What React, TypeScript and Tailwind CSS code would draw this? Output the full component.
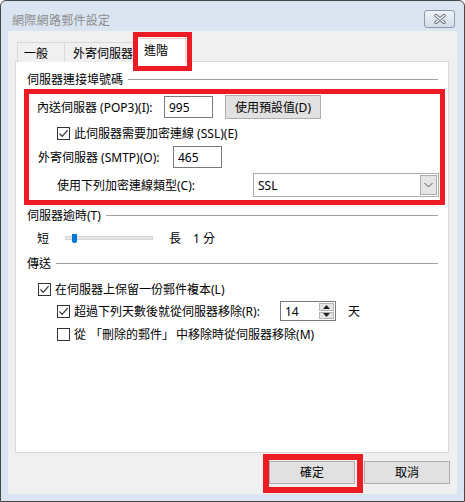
import type { ReactNode } from 'react'

const FONT = { fontFamily: '"Noto Sans", "Noto Sans CJK TC", sans-serif' }

function Check({ checked }: { checked: boolean }) {
  return (
    <span className="w-[13px] h-[13px] border border-[#333] bg-white flex items-center justify-center shrink-0">
      {checked && (
        <svg width="11" height="11" viewBox="0 0 11 11">
          <path d="M1.5 5.5 L4.2 8.3 L9.6 2.2" fill="none" stroke="#333" strokeWidth="1.2" />
        </svg>
      )}
    </span>
  )
}

function GroupTitle({ children, mt }: { children: ReactNode; mt: string }) {
  return (
    <div className={`flex items-center h-[15px] pl-[11px] pr-[10px] ${mt}`}>
      <span>{children}</span>
      <span className="flex-1 h-px bg-[#a0a0a0] ml-[5px]" />
    </div>
  )
}

function TextBox({ value, w }: { value: string; w: string }) {
  return (
    <div className={`${w} h-[22px] border border-[#7a7a7a] bg-white flex items-center pl-[4px]`}>
      {value}
    </div>
  )
}

export default function App() {
  return (
    <div
      style={FONT}
      className="w-[465px] h-[502px] bg-[#dbe5f2] border border-[#474747] rounded-t-[6px] flex flex-col text-[12px] leading-[15px] text-black"
    >
      {/* title bar */}
      <div className="h-[30px] flex items-start shrink-0">
        <span className="ml-[11px] mt-[12px] text-[#8c8c8c] text-[12px] tracking-[0.3px]">網際網路郵件設定</span>
        <div className="ml-auto mr-[9px] mt-[9px] w-[31px] h-[18px] rounded-[3px] border border-[#8e99a8] bg-gradient-to-b from-[#eef3f9] to-[#d3dce8] flex items-center justify-center">
          <svg width="14" height="10" viewBox="0 0 14 10">
            <path d="M3 1.5 L11 8.5 M11 1.5 L3 8.5" stroke="#5a6270" strokeWidth="3.2" strokeLinecap="round" />
            <path d="M3 1.5 L11 8.5 M11 1.5 L3 8.5" stroke="#ffffff" strokeWidth="1.6" strokeLinecap="round" />
          </svg>
        </div>
      </div>

      {/* client */}
      <div className="mx-[7px] h-[463px] bg-[#f0f0f0] px-[7px] pt-[7px] flex flex-col">
        {/* tabs */}
        <div className="flex items-end h-[24px] -mb-px relative z-10">
          <div className="ml-[2px] w-[48px] h-[20px] border border-b-0 border-[#d9d9d9] bg-[#f0f0f0] pl-[6px] pt-[3px]">一般</div>
          <div className="-ml-px w-[73px] h-[20px] border border-b-0 border-[#d9d9d9] bg-[#f0f0f0] pl-[8px] pt-[3px]">外寄伺服器</div>
          <div className="relative -ml-px w-[50px] h-[24px] border border-b-0 border-[#d9d9d9] bg-white pl-[7px] pt-[4px]">
            進階
            <div className="absolute -left-[4px] -top-[7px] w-[59px] h-[39px] border-[5px] border-[#ed1c24]" />
          </div>
        </div>

        {/* panel */}
        <div className="w-[434px] h-[392px] border border-[#d9d9d9] bg-white flex flex-col">
          <GroupTitle mt="mt-[10px]">伺服器連接埠號碼</GroupTitle>

          <div className="ml-[8px] mt-[2px] w-[421px] h-[116px] border-[5px] border-[#ed1c24] flex flex-col">
            <div className="flex items-center h-[24px] mt-[1px] pl-[8px]">
              <span className="w-[127px]">內送伺服器 (POP3)(I):</span>
              <TextBox value="995" w="w-[49px]" />
              <div className="ml-[12px] w-[96px] h-[24px] bg-[#e1e1e1] border border-[#adadad] flex items-center justify-center">
                使用預設值(D)
              </div>
            </div>
            <div className="flex items-center h-[16px] mt-[6px] pl-[28px] gap-[4px]">
              <Check checked />
              <span>此伺服器需要加密連線 (SSL)(E)</span>
            </div>
            <div className="flex items-center h-[22px] mt-[5px] pl-[9px]">
              <span className="w-[135px]">外寄伺服器 (SMTP)(O):</span>
              <TextBox value="465" w="w-[49px]" />
            </div>
            <div className="flex items-center h-[24px] mt-[5px] pl-[28px]">
              <span className="w-[196px]">使用下列加密連線類型(C):</span>
              <div className="w-[186px] h-[24px] border border-[#acacac] bg-white flex items-center pl-[4px] pr-[1px]">
                <span className="flex-1">SSL</span>
                <div className="w-[17px] h-[20px] bg-[#e5e5e5] border border-[#acacac] flex items-center justify-center">
                  <svg width="9" height="6" viewBox="0 0 9 6">
                    <path d="M0.5 1 L4.5 5 L8.5 1" fill="none" stroke="#555" strokeWidth="1" />
                  </svg>
                </div>
              </div>
            </div>
          </div>

          <GroupTitle mt="mt-[3px]">伺服器逾時(T)</GroupTitle>

          <div className="flex items-center h-[16px] mt-[7px] pl-[21px]">
            <span>短</span>
            <div className="relative ml-[16px] w-[88px] h-[4px] bg-[#e7e7e7] border border-[#d6d6d6]">
              <div className="absolute left-[6px] -top-[3px] w-[5px] h-[9px] bg-[#0078d7] rounded-b-[2px]" />
            </div>
            <span className="ml-[16px]">長</span>
            <span className="ml-[12px]">1 分</span>
          </div>

          <GroupTitle mt="mt-[10px]">傳送</GroupTitle>

          <div className="flex items-center h-[16px] mt-[10px] pl-[22px] gap-[4px]">
            <Check checked />
            <span>在伺服器上保留一份郵件複本(L)</span>
          </div>
          <div className="flex items-center h-[20px] mt-[4px] pl-[41px] gap-[4px]">
            <Check checked />
            <span className="w-[202px]">超過下列天數後就從伺服器移除(R):</span>
            <div className="w-[56px] h-[20px] border border-[#7a7a7a] bg-white flex items-center pl-[4px] pr-[1px]">
              <span className="flex-1">14</span>
              <div className="w-[15px] h-[16px] flex flex-col gap-px">
                <div className="flex-1 bg-[#e5e5e5] border border-[#b5b5b5] flex items-center justify-center">
                  <svg width="7" height="4" viewBox="0 0 7 4"><path d="M0 4 L3.5 0 L7 4 Z" fill="#222" /></svg>
                </div>
                <div className="flex-1 bg-[#e5e5e5] border border-[#b5b5b5] flex items-center justify-center">
                  <svg width="7" height="4" viewBox="0 0 7 4"><path d="M0 0 L7 0 L3.5 4 Z" fill="#222" /></svg>
                </div>
              </div>
            </div>
            <span className="ml-[8px]">天</span>
          </div>
          <div className="flex items-center h-[16px] mt-[5px] pl-[41px] gap-[4px]">
            <Check checked={false} />
            <span>
              從<span className="pl-[4px]">「</span>刪除的郵件」<span className="pl-[2px]">中移除時從伺服器移除(M)</span>
            </span>
          </div>
        </div>

        {/* buttons */}
        <div className="flex justify-end gap-[9px] mt-[8px]">
          <div className="relative w-[86px] h-[23px] bg-[#e1e1e1] border border-[#adadad] flex items-center justify-center">
            確定
            <div className="absolute -left-[7px] -top-[8px] w-[100px] h-[39px] border-[6px] border-[#ed1c24]" />
          </div>
          <div className="w-[86px] h-[23px] bg-[#e1e1e1] border border-[#adadad] flex items-center justify-center">取消</div>
        </div>
      </div>
    </div>
  )
}
